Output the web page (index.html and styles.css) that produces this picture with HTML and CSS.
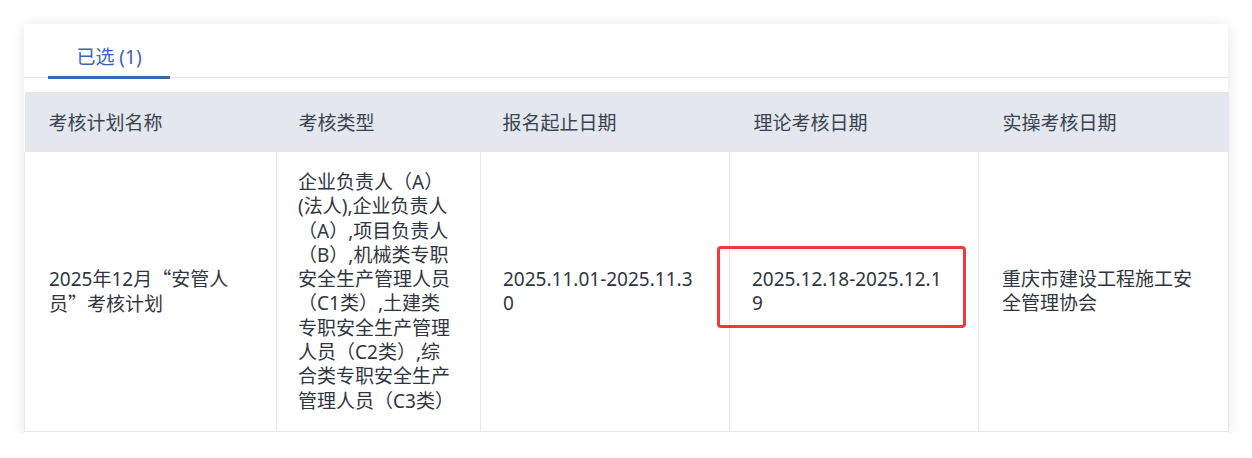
FILE: index.html
```html
<!DOCTYPE html>
<html lang="zh-CN">
<head>
<meta charset="utf-8">
<title>已选</title>
<link rel="stylesheet" href="styles.css">
</head>
<body>
<div class="card">
  <div class="tabs">
    <div class="tab active">已选 (1)</div>
  </div>
  <div class="gap"></div>
  <table class="grid">
    <colgroup>
      <col class="c1"><col class="c2"><col class="c3"><col class="c4"><col class="c5">
    </colgroup>
    <thead>
      <tr>
        <th>考核计划名称</th>
        <th class="h2">考核类型</th>
        <th class="h3">报名起止日期</th>
        <th>理论考核日期</th>
        <th>实操考核日期</th>
      </tr>
    </thead>
    <tbody>
      <tr>
        <td class="name">2025年12月<span class="q">“</span>安管人员<span class="q">”</span>考核计划</td>
        <td class="types">企业负责人（A）(法人),企业负责人（A）,项目负责人（B）,机械类专职安全生产管理人员（C1类）,土建类专职安全生产管理人员（C2类）,综合类专职安全生产管理人员（C3类）</td>
        <td class="date">2025.11.01-2025.11.30</td>
        <td class="date marked"><span class="mark"></span>2025.12.18-2025.12.19</td>
        <td class="org">重庆市建设工程施工安全管理协会</td>
      </tr>
    </tbody>
  </table>
</div>
</body>
</html>
```
FILE: styles.css
```css
html, body {
  margin: 0;
  padding: 0;
  background: #ffffff;
}
body {
  padding: 24px 24px 0 24px;
  font-family: "Noto Sans", "Noto Sans CJK SC", sans-serif;
  color: #333a45;
}
.card {
  width: 1204px;
  background: #ffffff;
  box-shadow: 0 2px 14px rgba(0, 0, 0, 0.10);
  padding-bottom: 2px;
}
.tabs {
  height: 53px;
  border-bottom: 1px solid #e6e8ec;
  padding-left: 24px;
  display: flex;
  align-items: flex-end;
}
.tab {
  width: 122px;
  box-sizing: border-box;
  height: 53px;
  padding-top: 19px;
  text-align: center;
  font-size: 19px;
  line-height: 24px;
  color: #3a64b4;
  border-bottom: 3px solid #3a64b4;
  margin-bottom: -2px;
}
.gap {
  height: 14px;
}
.grid {
  width: 1204px;
  border-collapse: collapse;
  table-layout: fixed;
  font-size: 19px;
}
.c1 { width: 252px; }
.c2 { width: 204px; }
.c3 { width: 249px; }
.c4 { width: 249px; }
.c5 { width: 250px; }
.grid th {
  background: #e4e7ee;
  height: 60px;
  padding: 0 22px 0 24px;
  text-align: left;
  font-weight: normal;
  color: #3b4250;
}
.grid th.h2 { padding-left: 22px; }
.grid th.h3 { padding-left: 22px; }
.grid td {
  border: 1px solid #e6e8ec;
  border-top: none;
  padding: 18px 22px 18px 23px;
  line-height: 24.3px;
  vertical-align: middle;
  word-break: break-all;
  color: #303641;
}
.q {
  font-family: "Noto Sans CJK SC", sans-serif;
}
.grid td.name {
  padding-left: 24px;
  padding-right: 38px;
}
.grid td.types {
  padding-left: 21px;
  padding-right: 25px;
}
.grid td.date {
  padding-left: 22px;
  padding-right: 32px;
}
.grid td.org {
  padding-right: 28px;
}
.grid td.marked {
  position: relative;
}
.mark {
  position: absolute;
  left: -13px;
  top: 94px;
  width: 249px;
  height: 82px;
  box-sizing: border-box;
  border: 3px solid #ee3a3d;
  border-radius: 4px;
}
```
